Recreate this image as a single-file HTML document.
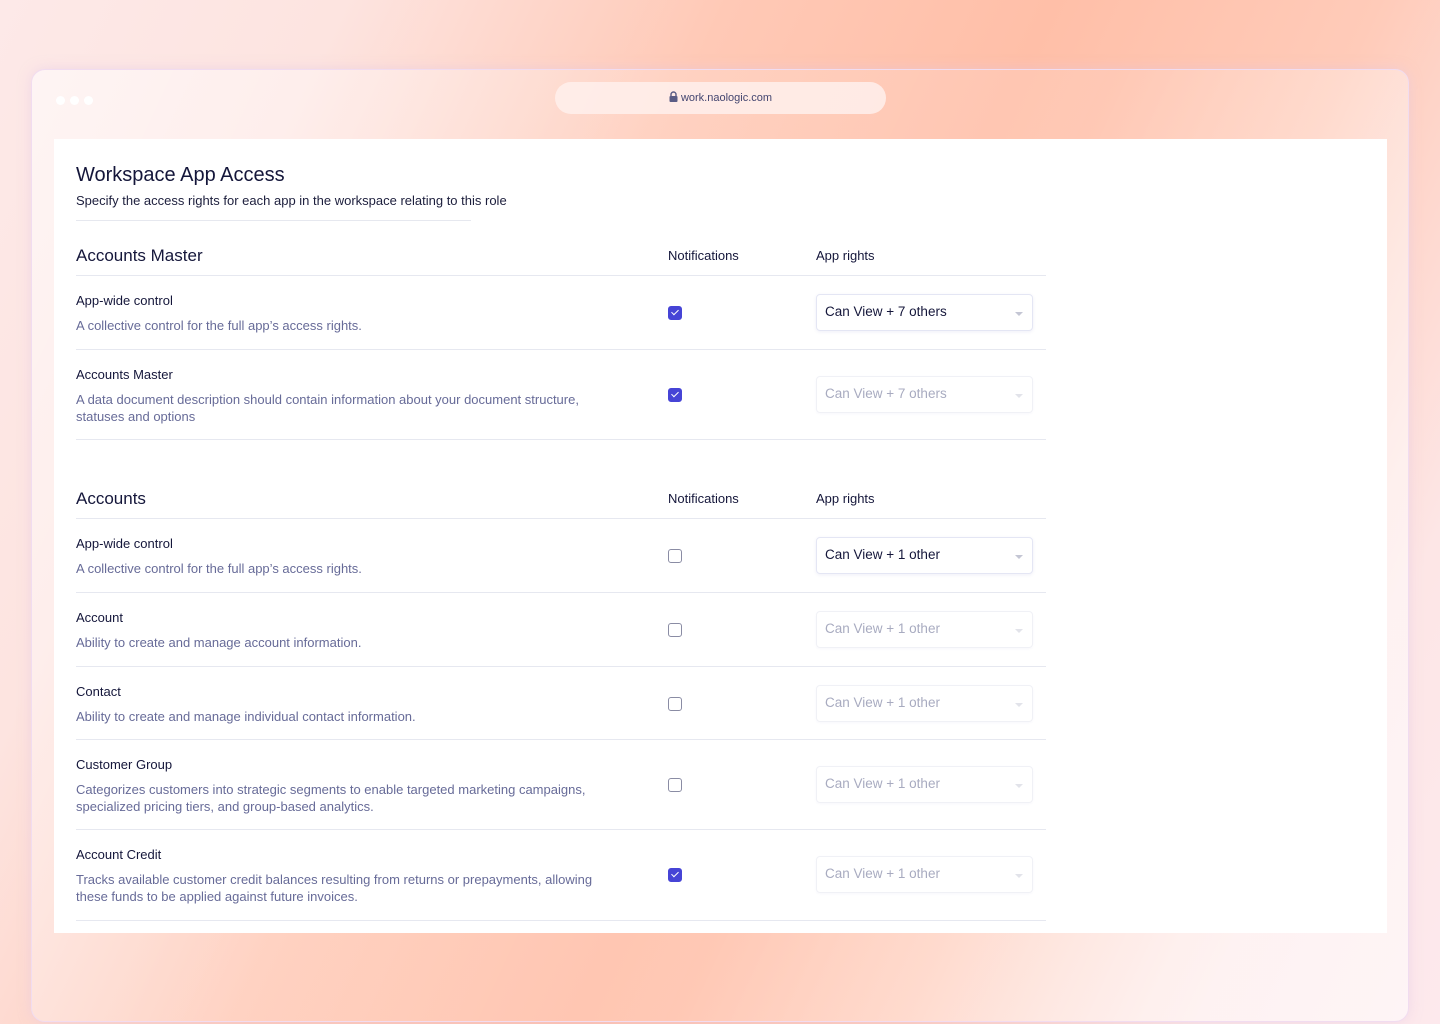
<!DOCTYPE html>
<html style="overflow:hidden;height:1024px"><head><meta charset="utf-8"><style>
*{box-sizing:border-box;margin:0;padding:0}
body{width:1440px;height:1024px;overflow:hidden;font-family:"Liberation Sans",sans-serif;position:relative;
background:linear-gradient(115deg,#fde9e8 0%,#fde4e0 18%,#ffc9b6 38%,#ffbfa8 55%,#ffcbb9 72%,#fde6e6 88%,#fde9ed 100%);}
.win{position:absolute;left:31px;top:69px;width:1378px;height:953px;border-radius:14px;border:1.5px solid #f1dcf0;
background:linear-gradient(115deg,rgba(255,255,255,.55) 0%,rgba(255,255,255,.15) 35%,rgba(255,255,255,.1) 60%,rgba(255,255,255,.5) 85%);box-shadow:0 0 12px rgba(230,200,230,.5)}
.dots{position:absolute;left:24px;top:22px}
.dots span{display:inline-block;width:9px;height:9px;border-radius:50%;background:#fff;margin-right:5px}
.url{position:absolute;left:523px;top:12px;width:331px;height:32px;border-radius:16px;background:rgba(255,240,236,.85);text-align:center;font-size:11px;color:#444670;line-height:32px}
.panel{position:absolute;left:54px;top:139px;width:1333px;height:794px;background:#fff}
.h1{position:absolute;left:22px;top:25px;font-size:20px;color:#14163a}
.sub{position:absolute;left:22px;top:54px;font-size:13px;color:#1c1e3c}
.hr0{position:absolute;left:22px;top:81px;width:395px;height:1px;background:#e6e8ef}
.sec{position:absolute;left:22px;width:970px}
.sh{height:38px;border-bottom:1px solid #e6e8f0;position:relative}
.sh .t{position:absolute;left:0;top:8px;font-size:17px;color:#14163a}
.sh .n{position:absolute;left:592px;top:10px;font-size:13px;color:#14163a}
.sh .a{position:absolute;left:740px;top:10px;font-size:13px;color:#14163a}
.row{position:relative;border-bottom:1px solid #e6e8f0}
.row .t{position:absolute;left:0;top:17px;font-size:13px;color:#14163a}
.row .d{position:absolute;left:0;top:41px;font-size:13px;color:#676b98;line-height:17px;width:548px}
.cb{position:absolute;left:592px;width:14px;height:14px;border-radius:3px;border:1.5px solid #8a8ca4;background:#fff}
.cb.on{background:#4644d6;border-color:#4644d6}
.cb.on:after{content:"";position:absolute;left:3.5px;top:1px;width:3px;height:6px;border:solid #fff;border-width:0 1.5px 1.5px 0;transform:rotate(45deg)}
.sel{position:absolute;left:740px;width:217px;height:37px;border-radius:4px;border:1px solid #e4e6f4;box-shadow:0 1px 3px rgba(120,120,200,.12);font-size:13.5px;color:#14163a;padding:9px 8px}
.sel.dis{color:#a8abc0;border-color:#f0f1f6;box-shadow:0 1px 2px rgba(120,120,200,.05)}
.sel:after{content:"";position:absolute;right:9px;top:17px;border:4px solid transparent;border-top-color:#c4c6d4}
.sel.dis:after{border-top-color:#e2e3ea}
</style></head><body>
<div class="win">
<div class="dots"><span></span><span></span><span></span></div>
<div class="url"><svg width="9" height="11" viewBox="0 0 9 11" style="vertical-align:-1px;margin-right:3px"><path d="M2 5V3.5a2.5 2.5 0 0 1 5 0V5" stroke="#5a5c85" stroke-width="1.4" fill="none"/><rect x="0.5" y="5" width="8" height="6" rx="1" fill="#5a5c85"/></svg>work.naologic.com</div>
</div>
<div class="panel">
<div class="h1">Workspace App Access</div>
<div class="sub">Specify the access rights for each app in the workspace relating to this role</div>
<div class="hr0"></div>

<div class="sec" style="top:99px">
<div class="sh"><span class="t">Accounts Master</span><span class="n">Notifications</span><span class="a">App rights</span></div>
<div class="row" style="height:74px"><span class="t">App-wide control</span><span class="d">A collective control for the full app’s access rights.</span><span class="cb on" style="top:30px"></span><span class="sel" style="top:18px">Can View + 7 others</span></div>
<div class="row" style="height:90px"><span class="t">Accounts Master</span><span class="d">A data document description should contain information about your document structure, statuses and options</span><span class="cb on" style="top:38px"></span><span class="sel dis" style="top:26px">Can View + 7 others</span></div>
</div>

<div class="sec" style="top:342px">
<div class="sh"><span class="t">Accounts</span><span class="n">Notifications</span><span class="a">App rights</span></div>
<div class="row" style="height:74px"><span class="t">App-wide control</span><span class="d">A collective control for the full app’s access rights.</span><span class="cb" style="top:30px"></span><span class="sel" style="top:18px">Can View + 1 other</span></div>
<div class="row" style="height:74px"><span class="t">Account</span><span class="d">Ability to create and manage account information.</span><span class="cb" style="top:30px"></span><span class="sel dis" style="top:18px">Can View + 1 other</span></div>
<div class="row" style="height:73px"><span class="t">Contact</span><span class="d">Ability to create and manage individual contact information.</span><span class="cb" style="top:30px"></span><span class="sel dis" style="top:18px">Can View + 1 other</span></div>
<div class="row" style="height:90px"><span class="t">Customer Group</span><span class="d">Categorizes customers into strategic segments to enable targeted marketing campaigns, specialized pricing tiers, and group-based analytics.</span><span class="cb" style="top:38px"></span><span class="sel dis" style="top:26px">Can View + 1 other</span></div>
<div class="row" style="height:91px"><span class="t">Account Credit</span><span class="d">Tracks available customer credit balances resulting from returns or prepayments, allowing these funds to be applied against future invoices.</span><span class="cb on" style="top:38px"></span><span class="sel dis" style="top:26px">Can View + 1 other</span></div>
</div>
</div>
</body></html>
